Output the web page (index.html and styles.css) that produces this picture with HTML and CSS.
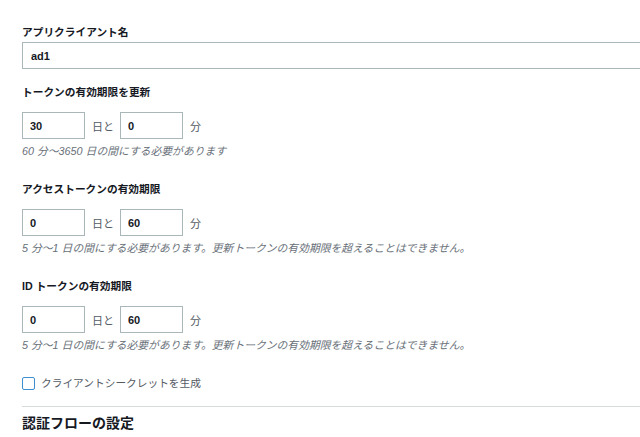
FILE: index.html
```html
<!DOCTYPE html>
<html lang="ja">
<head>
    <meta charset="UTF-8">
    <meta name="viewport" content="width=device-width, initial-scale=1.0">
    <title>アプリクライアントの設定</title>
    <link rel="stylesheet" href="styles.css">
</head>
<body>
    <div class="form">
        <div class="field">
            <label class="field-label" for="clientName">アプリクライアント名</label>
            <input type="text" class="text-input wide" id="clientName" value="ad1">
        </div>

        <div class="field section">
            <div class="field-label">トークンの有効期限を更新</div>
            <div class="duration">
                <input type="text" class="text-input short" value="30">
                <span class="unit">日と</span>
                <input type="text" class="text-input short" value="0">
                <span class="unit">分</span>
            </div>
            <div class="hint">60 分〜3650 日の間にする必要があります</div>
        </div>

        <div class="field section">
            <div class="field-label">アクセストークンの有効期限</div>
            <div class="duration">
                <input type="text" class="text-input short" value="0">
                <span class="unit">日と</span>
                <input type="text" class="text-input short" value="60">
                <span class="unit">分</span>
            </div>
            <div class="hint">5 分〜1 日の間にする必要があります。更新トークンの有効期限を超えることはできません。</div>
        </div>

        <div class="field section">
            <div class="field-label">ID トークンの有効期限</div>
            <div class="duration">
                <input type="text" class="text-input short" value="0">
                <span class="unit">日と</span>
                <input type="text" class="text-input short" value="60">
                <span class="unit">分</span>
            </div>
            <div class="hint">5 分〜1 日の間にする必要があります。更新トークンの有効期限を超えることはできません。</div>
        </div>

        <label class="checkbox-row">
            <span class="checkbox"></span>
            <span class="checkbox-text">クライアントシークレットを生成</span>
        </label>

        <hr class="divider">
        <h2 class="section-title">認証フローの設定</h2>
    </div>
</body>
</html>
```

FILE: styles.css
```css
body {
    margin: 0;
    padding: 0;
    background: #ffffff;
    color: #16191f;
    font-family: "Liberation Sans", "Noto Sans CJK JP", sans-serif;
    font-size: 11px;
}
.form {
    padding: 24px 0 0 22px;
}
.field {
    display: flex;
    flex-direction: column;
    align-items: flex-start;
}
.section {
    margin-top: 15px;
}
.section + .section {
    margin-top: 22px;
}
.field-label {
    display: block;
    font-weight: bold;
    font-size: 10.7px;
    line-height: 16px;
    color: #16191f;
}
.text-input {
    box-sizing: border-box;
    height: 27px;
    border: 1px solid #aab7b8;
    border-radius: 0;
    background: #fff;
    color: #16191f;
    font-family: "Liberation Sans", "Noto Sans CJK JP", sans-serif;
    font-size: 11px;
    font-weight: bold;
    padding: 0 8px;
    outline: none;
}
/* the name field runs on past the right edge of the window */
.text-input.wide {
    width: 100%;
    border-right: none;
    margin-top: 2px;
}
.duration {
    display: flex;
    align-items: center;
    margin-top: 12px;
}
.text-input.short {
    width: 63px;
    padding-left: 7px;
}
.unit {
    margin: 0 6px 0 7px;
    color: #545b64;
}
.hint {
    margin-top: 4px;
    font-size: 10.8px;
    line-height: 16px;
    font-style: italic;
    color: #687078;
}
.checkbox-row {
    display: flex;
    align-items: center;
    margin-top: 22px;
    line-height: 16px;
}
.checkbox {
    box-sizing: border-box;
    width: 13px;
    height: 13px;
    border: 1px solid #3f8fd0;
    border-radius: 2px;
    background: #fff;
}
.checkbox-text {
    margin-left: 6px;
    font-size: 10.7px;
    color: #545b64;
}
.divider {
    border: none;
    border-top: 1px solid #d5dbdb;
    margin: 15px 0 0 0;
}
.section-title {
    margin: 6px 0 0 0;
    font-size: 14px;
    line-height: 20px;
    font-weight: bold;
    color: #16191f;
}
```
